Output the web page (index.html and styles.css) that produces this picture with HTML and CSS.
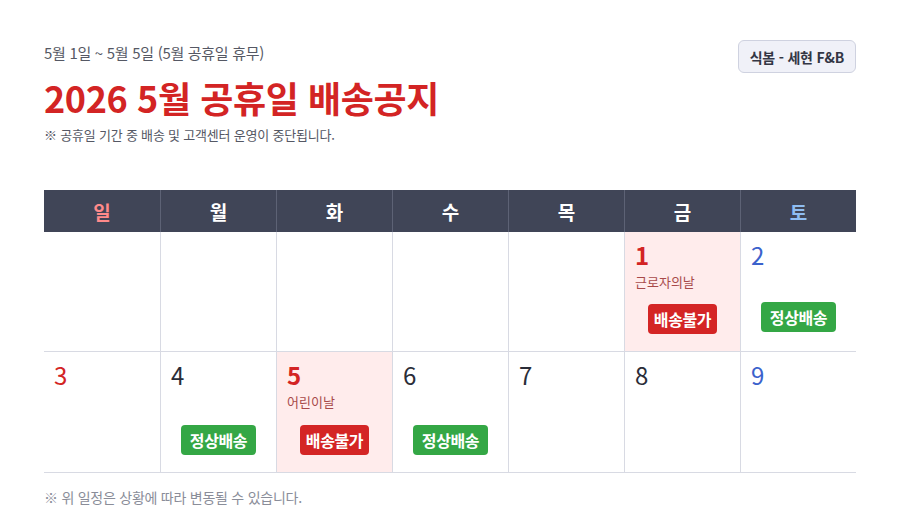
FILE: index.html
```html
<!DOCTYPE html>
<html lang="ko">
<head>
<meta charset="utf-8">
<link rel="stylesheet" href="styles.css">
</head>
<body>
<div class="page">
  <header class="top">
    <div class="intro">
      <div class="period">5월 1일 ~ 5월 5일 (5월 공휴일 휴무)</div>
      <h1 class="title">2026 5월 공휴일 배송공지</h1>
      <div class="note">※ 공휴일 기간 중 배송 및 고객센터 운영이 중단됩니다.</div>
    </div>
    <div class="brand">식봄 - 세현 F&amp;B</div>
  </header>

  <div class="cal">
    <div class="head sun">일</div>
    <div class="head">월</div>
    <div class="head">화</div>
    <div class="head">수</div>
    <div class="head">목</div>
    <div class="head">금</div>
    <div class="head sat">토</div>

    <div class="cell"></div>
    <div class="cell"></div>
    <div class="cell"></div>
    <div class="cell"></div>
    <div class="cell"></div>
    <div class="cell holiday">
      <div class="num red bold">1</div>
      <div class="hname">근로자의날</div>
      <div class="badge no">배송불가</div>
    </div>
    <div class="cell">
      <div class="num blue">2</div>
      <div class="badge ok up">정상배송</div>
    </div>

    <div class="cell">
      <div class="num red">3</div>
    </div>
    <div class="cell">
      <div class="num">4</div>
      <div class="badge ok">정상배송</div>
    </div>
    <div class="cell holiday">
      <div class="num red bold">5</div>
      <div class="hname">어린이날</div>
      <div class="badge no">배송불가</div>
    </div>
    <div class="cell">
      <div class="num">6</div>
      <div class="badge ok">정상배송</div>
    </div>
    <div class="cell">
      <div class="num">7</div>
    </div>
    <div class="cell">
      <div class="num">8</div>
    </div>
    <div class="cell">
      <div class="num blue">9</div>
    </div>
  </div>

  <div class="foot">※ 위 일정은 상황에 따라 변동될 수 있습니다.</div>
</div>
</body>
</html>
```

FILE: styles.css
```css
* { box-sizing: border-box; }
html, body { margin: 0; padding: 0; background: #ffffff; }
body {
  font-family: "Noto Sans CJK KR", "Noto Sans", sans-serif;
  color: #2a2d38;
}
.page {
  width: 900px;
  padding: 40px 44px 0 44px;
}
.top {
  display: flex;
  justify-content: space-between;
  align-items: flex-start;
}
.period {
  font-size: 15px;
  line-height: 24px;
  color: #555864;
  margin-top: 1px;
  letter-spacing: -0.3px;
}
.title {
  margin: 8px 0 0 0;
  font-size: 36px;
  line-height: 48px;
  font-weight: 700;
  color: #d32424;
  letter-spacing: -0.4px;
}
.note {
  margin-top: 5px;
  font-size: 13px;
  line-height: 18px;
  color: #555864;
  letter-spacing: -0.2px;
}
.brand {
  height: 33px;
  padding: 0 11px;
  display: flex;
  align-items: center;
  border: 1px solid #cfd2e0;
  border-radius: 6px;
  background: #f0f1f8;
  font-size: 14px;
  font-weight: 700;
  color: #333644;
  letter-spacing: -0.2px;
}
.cal {
  margin-top: 46px;
  display: grid;
  grid-template-columns: repeat(7, 116px);
  grid-template-rows: 42px 120px 120px;
  border-bottom: 1px solid #d8dae3;
}
.head {
  background: #404557;
  color: #ffffff;
  font-size: 19px;
  font-weight: 700;
  display: flex;
  align-items: center;
  justify-content: center;
  border-left: 1px solid #5d6275;
}
.head:first-child { border-left: none; }
.head.sun { color: #ff8a8a; }
.head.sat { color: #8fbdf2; }
.cell {
  display: flex;
  flex-direction: column;
  padding: 6px 10px 17px 10px;
  border-left: 1px solid #d8dae3;
  border-bottom: 1px solid #d8dae3;
}
.cell:nth-child(7n+1) { border-left: none; }
.cell:nth-child(n+15) { border-bottom: none; }
.cell.holiday { background: #ffecec; }
.num {
  font-size: 24px;
  line-height: 34px;
  color: #2a2d38;
}
.num.red { color: #d32424; }
.num.blue { color: #3b62cc; }
.num.bold { font-weight: 700; }
.hname {
  margin-top: 1px;
  font-size: 13px;
  line-height: 18px;
  color: #a84a4a;
}
.badge {
  margin-top: auto;
  align-self: center;
  height: 30px;
  border-radius: 4px;
  display: flex;
  align-items: center;
  font-size: 16px;
  font-weight: 700;
  color: #ffffff;
  letter-spacing: -0.4px;
}
.badge.no { background: #d42525; padding: 0 6px; }
.badge.ok { background: #34a745; padding: 0 9px; }
.badge.up { margin-bottom: 2px; }
.foot {
  margin-top: 14px;
  font-size: 14px;
  line-height: 20px;
  color: #8a8d99;
  letter-spacing: -0.25px;
}
```
